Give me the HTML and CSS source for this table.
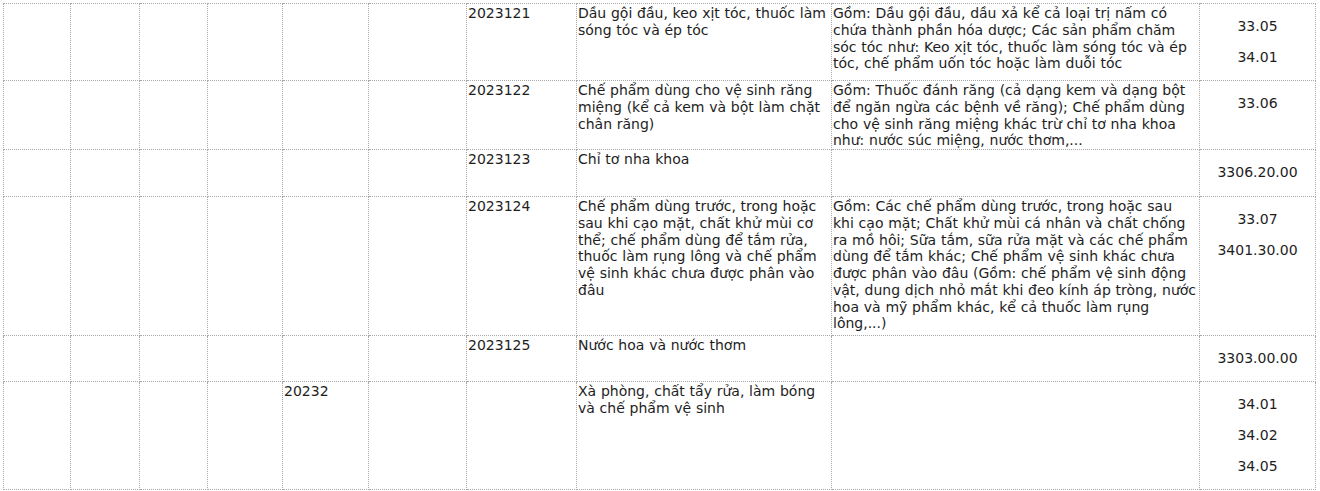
FILE: index.html
```html
<!DOCTYPE html>
<html lang="vi">
<head>
<meta charset="utf-8">
<link rel="stylesheet" href="styles.css">
</head>
<body>
<table class="grid">
  <colgroup>
    <col class="c1"><col class="c2"><col class="c3"><col class="c4"><col class="c5">
    <col class="c6"><col class="c7"><col class="c8"><col class="c9"><col class="c10">
  </colgroup>
  <tbody>
    <tr class="r1">
      <td></td><td></td><td></td><td></td><td></td><td></td>
      <td>2023121</td>
      <td>Dầu gội đầu, keo xịt tóc, thuốc làm sóng tóc và ép tóc</td>
      <td class="desc">Gồm: Dầu gội đầu, dầu xả kể cả loại trị nấm có chứa thành phần hóa dược; Các sản phẩm chăm sóc tóc như: Keo xịt tóc, thuốc làm sóng tóc và ép tóc, chế phẩm uốn tóc hoặc làm duỗi tóc</td>
      <td class="code"><p>33.05</p><p>34.01</p></td>
    </tr>
    <tr class="r2">
      <td></td><td></td><td></td><td></td><td></td><td></td>
      <td>2023122</td>
      <td>Chế phẩm dùng cho vệ sinh răng miệng (kể cả kem và bột làm chặt chân răng)</td>
      <td class="desc">Gồm: Thuốc đánh răng (cả dạng kem và dạng bột để ngăn ngừa các bệnh về răng); Chế phẩm dùng cho vệ sinh răng miệng khác trừ chỉ tơ nha khoa như: nước súc miệng, nước thơm,...</td>
      <td class="code"><p>33.06</p></td>
    </tr>
    <tr class="r3">
      <td></td><td></td><td></td><td></td><td></td><td></td>
      <td>2023123</td>
      <td>Chỉ tơ nha khoa</td>
      <td class="desc"></td>
      <td class="code"><p>3306.20.00</p></td>
    </tr>
    <tr class="r4">
      <td></td><td></td><td></td><td></td><td></td><td></td>
      <td>2023124</td>
      <td>Chế phẩm dùng trước, trong hoặc sau khi cạo mặt, chất khử mùi cơ thể; chế phẩm dùng để tắm rửa, thuốc làm rụng lông và chế phẩm vệ sinh khác chưa được phân vào đâu</td>
      <td class="desc">Gồm: Các chế phẩm dùng trước, trong hoặc sau khi cạo mặt; Chất khử mùi cá nhân và chất chống ra mồ hôi; Sữa tắm, sữa rửa mặt và các chế phẩm dùng để tắm khác; Chế phẩm vệ sinh khác chưa được phân vào đâu (Gồm: chế phẩm vệ sinh động vật, dung dịch nhỏ mắt khi đeo kính áp tròng, nước hoa và mỹ phẩm khác, kể cả thuốc làm rụng lông,...)</td>
      <td class="code"><p>33.07</p><p>3401.30.00</p></td>
    </tr>
    <tr class="r5">
      <td></td><td></td><td></td><td></td><td></td><td></td>
      <td>2023125</td>
      <td>Nước hoa và nước thơm</td>
      <td class="desc"></td>
      <td class="code"><p>3303.00.00</p></td>
    </tr>
    <tr class="r6">
      <td></td><td></td><td></td><td></td>
      <td>20232</td>
      <td></td><td></td>
      <td>Xà phòng, chất tẩy rửa, làm bóng và chế phẩm vệ sinh</td>
      <td class="desc"></td>
      <td class="code"><p>34.01</p><p>34.02</p><p>34.05</p></td>
    </tr>
  </tbody>
</table>
</body>
</html>
```

FILE: styles.css
```css
html, body {
  margin: 0;
  padding: 0;
  background: #ffffff;
}

body {
  padding: 3px 0 0 3px;
  font-family: "DejaVu Sans", Verdana, sans-serif;
  font-size: 14px;
  line-height: 16.75px;
  word-spacing: 0.3px;
  color: #1e1e1e;
}

.grid {
  border-collapse: collapse;
  table-layout: fixed;
  width: 1313px;
}

.grid td {
  border: 1px dotted #a8a8a8;
  padding: 1px 1px 0;
  vertical-align: top;
  overflow: hidden;
}

.grid td.desc {
  padding-right: 2.2px;
}

.c1 { width: 67px; }
.c2 { width: 69px; }
.c3 { width: 68px; }
.c4 { width: 75px; }
.c5 { width: 86px; }
.c6 { width: 98px; }
.c7 { width: 110px; }
.c8 { width: 255px; }
.c9 { width: 368px; }
.c10 { width: 116px; }

.r1 { height: 77px; }
.r2 { height: 69px; }
.r3 { height: 47px; }
.r4 { height: 139px; }
.r5 { height: 46px; }
.r6 { height: 108px; }

.code {
  text-align: center;
}

.code p {
  margin: 12px 0;
  line-height: 19px;
}
```
